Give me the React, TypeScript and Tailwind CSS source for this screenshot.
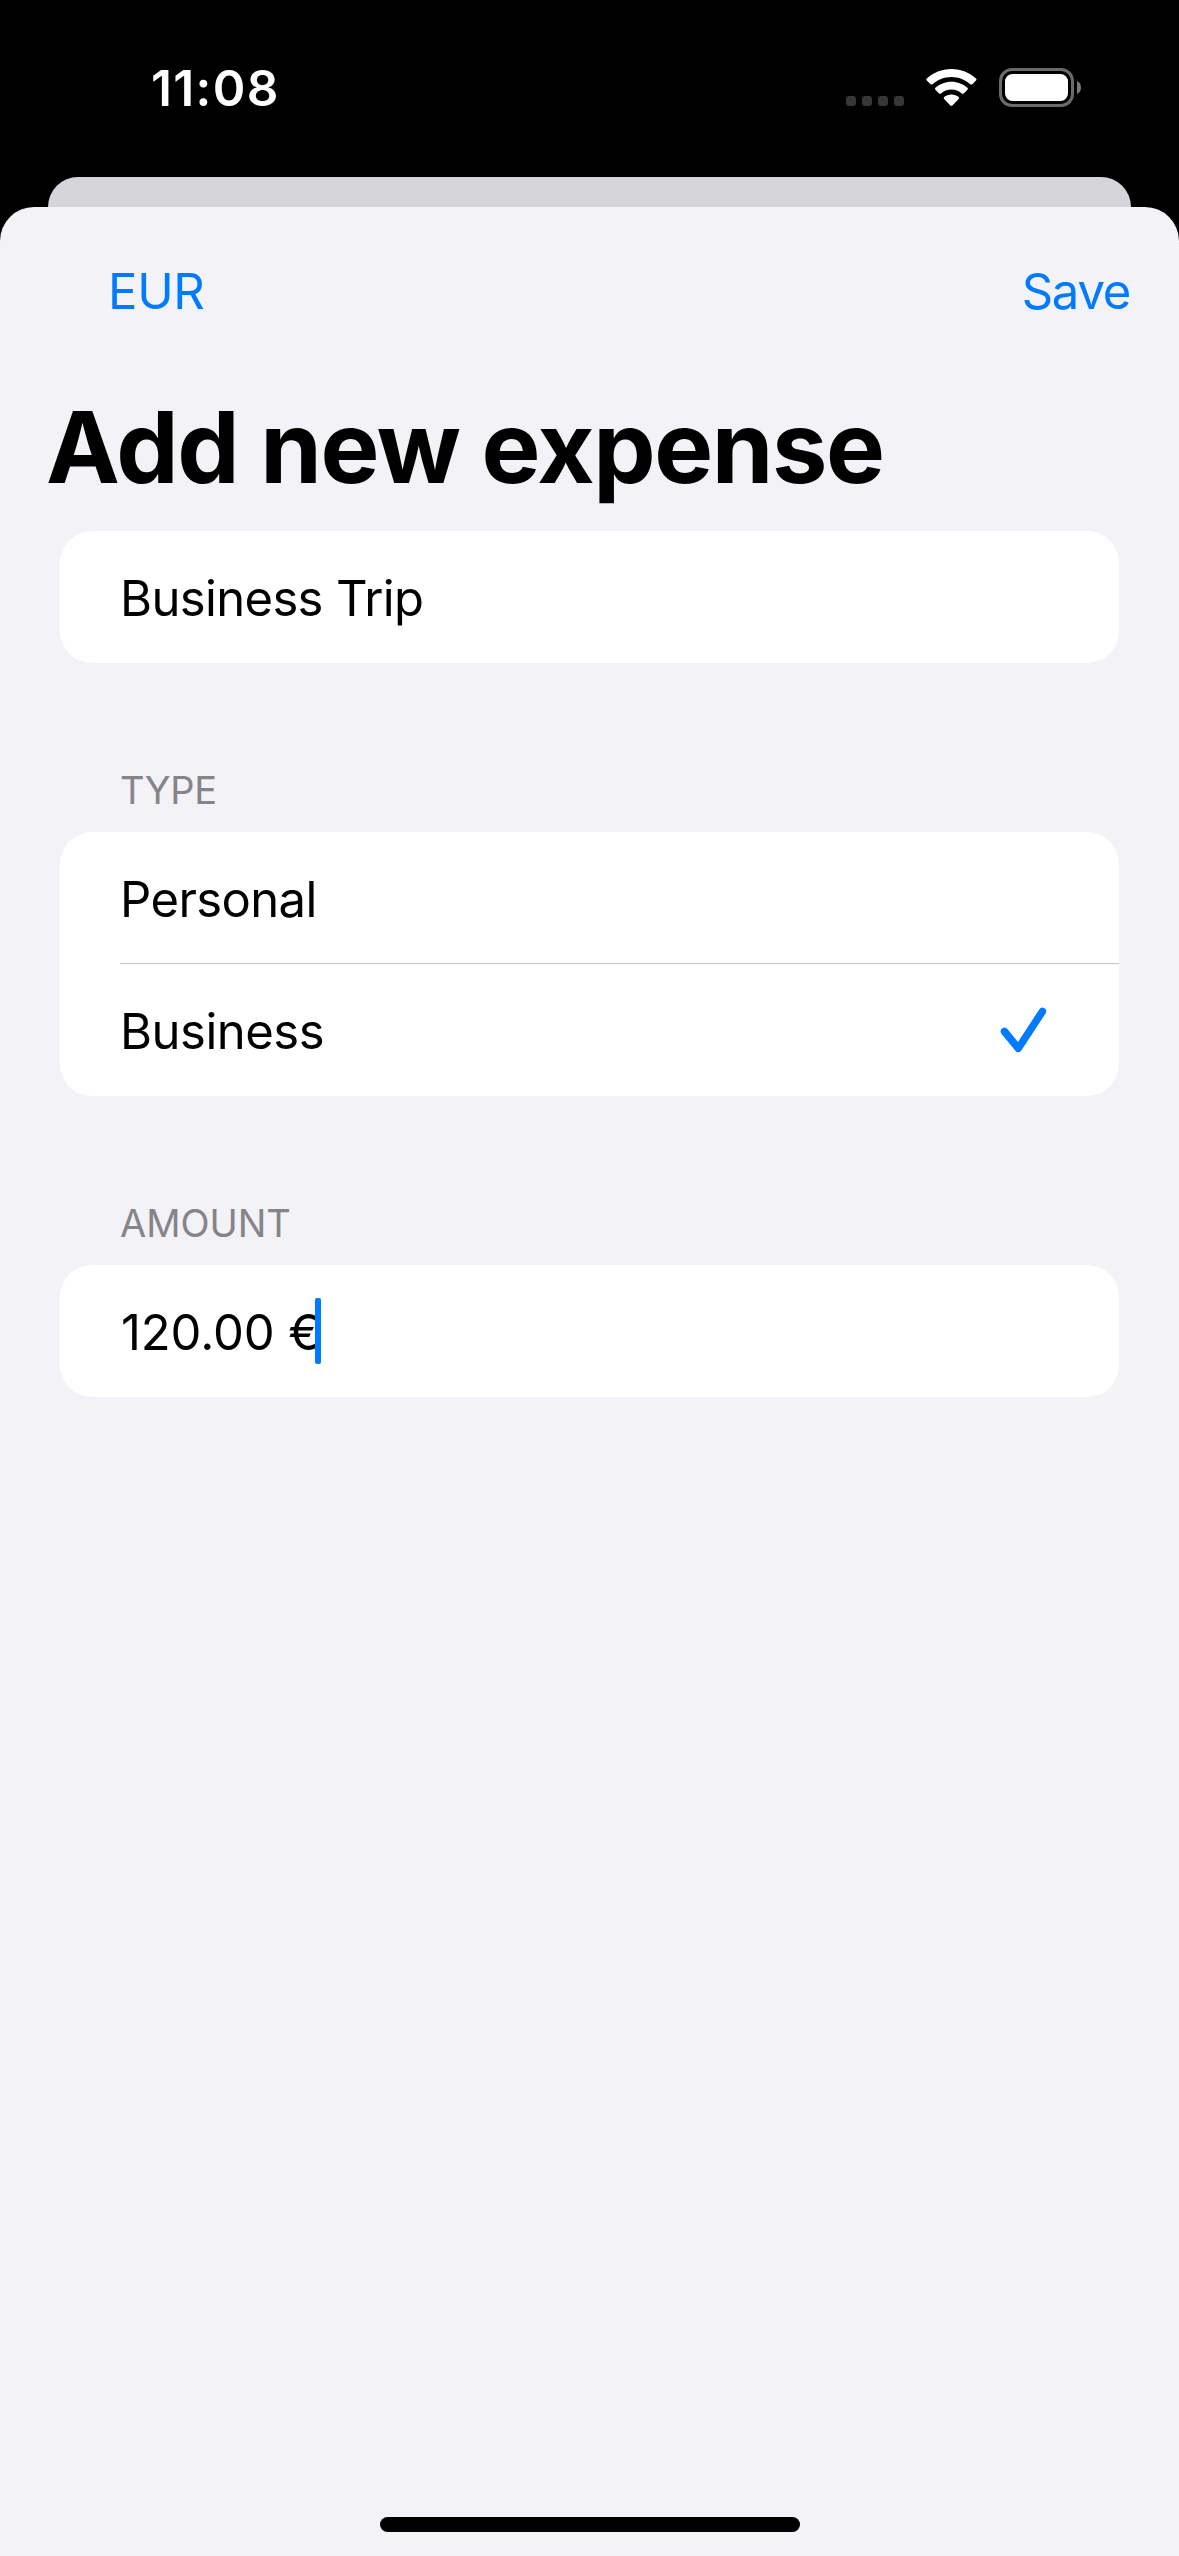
import type { ReactNode } from 'react';

function StatusBar() {
  return (
    <header className="flex h-[177px] items-start justify-between pr-[97px] pl-[151px] text-white">
      <span className="mt-[58px] text-[49.5px] leading-[60px] font-semibold tracking-[1.35px]">11:08</span>
      <div className="mt-[68px] flex items-start">
        <div className="mt-[28px] mr-[22px] flex gap-[6px]">
          <span className="size-[10px] rounded-[3px] bg-[#363636]" />
          <span className="size-[10px] rounded-[3px] bg-[#363636]" />
          <span className="size-[10px] rounded-[3px] bg-[#363636]" />
          <span className="size-[10px] rounded-[3px] bg-[#363636]" />
        </div>
        <WifiIcon />
        <BatteryIcon />
      </div>
    </header>
  );
}

function WifiIcon() {
  return (
    <svg className="mr-[22px] h-[39px] w-[51px]" viewBox="926 68 51 39" fill="white">
      <path d="M951.4 69C961 69 969.6 72.700 976 78.600Q977 79.600 976 80.600L972.300 84.200Q971.300 85 970.300 84.200C965.300 79.700 958.700 76.900 951.400 76.900C944.100 76.900 937.500 79.700 932.500 84.200Q931.500 85 930.500 84.200L926.800 80.600Q925.800 79.600 926.800 78.600C933.200 72.700 941.800 69 951.400 69Z" />
      <path d="M951.4 81.700C957.600 81.700 963.200 84 967.400 87.800Q968.400 88.800 967.400 89.800L963.700 93.400Q962.700 94.300 961.700 93.400C959 91 955.400 89.500 951.400 89.500C947.400 89.500 943.800 91 941.100 93.400Q940.100 94.300 939.100 93.400L935.400 89.800Q934.400 88.800 935.400 87.800C939.600 84 945.200 81.700 951.400 81.700Z" />
      <path d="M951.4 94.500C954.200 94.500 956.700 95.500 958.700 97.100Q959.500 98 958.700 98.900L952.400 105.400Q951.400 106.300 950.400 105.400L944.100 98.900Q943.300 98 944.100 97.100C946.100 95.500 948.600 94.500 951.400 94.500Z" />
    </svg>
  );
}

function BatteryIcon() {
  return (
    <svg className="h-[39px] w-[83px]" viewBox="999 68 83 39">
      <rect x="1000.500" y="69.500" width="72" height="36" rx="11.500" fill="none" stroke="#6b6b6b" strokeWidth="3" />
      <rect x="1005" y="74" width="63" height="27" rx="7.500" fill="white" />
      <path d="M1077 81C1082.300 83 1082.300 92 1077 94Z" fill="#7a7a7a" />
    </svg>
  );
}

function Card({ children }: { children: ReactNode }) {
  return <div className="overflow-hidden rounded-[32px] bg-white">{children}</div>;
}

export default function App() {
  return (
    <div className="flex h-[2556px] w-[1179px] flex-col overflow-hidden bg-black font-[Inter,sans-serif] text-[49px] leading-[59px] text-black">
      <StatusBar />
      <div className="mx-[48px] h-[30px] shrink-0 bg-black">
        <div className="h-full rounded-t-[30px] bg-[#d5d4d9]" />
      </div>
      <main className="flex flex-1 flex-col rounded-t-[34px] bg-[#f2f2f7]">
        <nav className="flex justify-between pt-[55px] pr-[49px] pl-[108px] text-[#007aff]">
          <button className="tracking-[-0.3px]">EUR</button>
          <button className="tracking-[-1.27px]">Save</button>
        </nav>
        <h1 className="mt-[66px] pl-[46px] text-[99px] leading-[120px] font-bold tracking-[-1.4px]">Add new expense</h1>

        <div className="mt-[24px] flex flex-col px-[60px]">
          <Card>
            <p className="h-[132px] pt-[38px] pl-[60px] tracking-[-0.65px]">Business Trip</p>
          </Card>

          <h2 className="mt-[104px] mb-[19px] pl-[60px] text-[38px] leading-[46px] tracking-[-0.4px] text-[#85848a]">TYPE</h2>
          <Card>
            <div className="h-[132px] pl-[60px]">
              <p className="h-full border-b border-[#c6c6c8] pt-[38px] tracking-[-0.61px]">Personal</p>
            </div>
            <div className="flex h-[132px] justify-between pt-[38px] pr-[70px] pl-[60px]">
              <p className="tracking-[-0.5px]">Business</p>
              <svg
                className="mt-[3px] h-[50px] w-[50px]"
                viewBox="999 1005 50 50"
                fill="none"
                stroke="#007aff"
                strokeWidth="7.500"
                strokeLinecap="round"
                strokeLinejoin="round"
              >
                <path d="M1004.500 1031.500L1018.300 1048.300L1042.400 1011.500" />
              </svg>
            </div>
          </Card>

          <h2 className="mt-[104px] mb-[19px] pl-[60px] text-[38px] leading-[46px] tracking-[-0.05px] text-[#85848a]">AMOUNT</h2>
          <Card>
            <div className="flex h-[132px] pl-[61px]">
              <p className="w-[200px] pt-[38px] tracking-[-0.1px] whitespace-pre">120.00 €</p>
              <span className="relative mt-[33px] -ml-[6px] h-[66px] w-[6px] rounded-[2px] bg-[#007aff]" />
            </div>
          </Card>
        </div>

        <div className="mx-auto mt-auto mb-[24px] h-[15px] w-[420px] rounded-full bg-black" />
      </main>
    </div>
  );
}
